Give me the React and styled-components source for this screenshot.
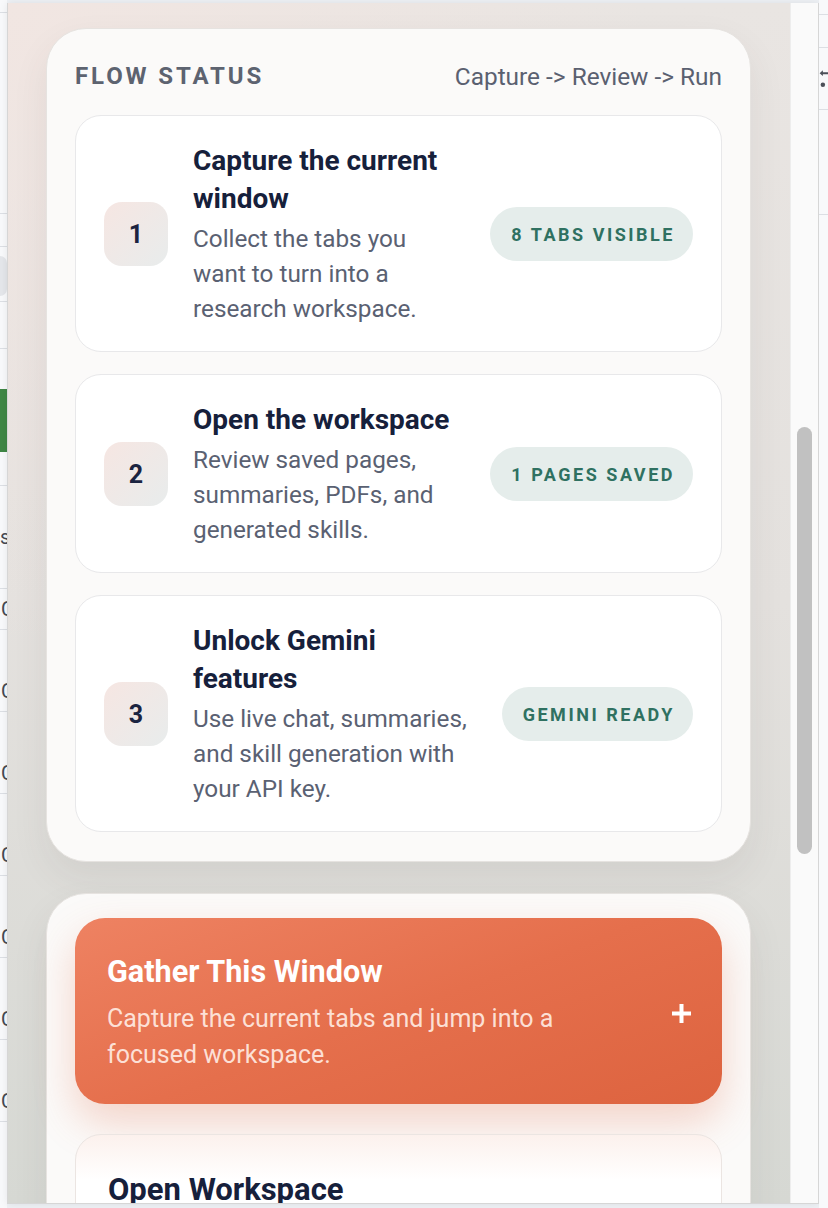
import React from 'react';
import styled, { createGlobalStyle } from 'styled-components';

const GlobalStyle = createGlobalStyle`
  html, body {
    margin: 0;
    padding: 0;
  }
  body {
    background: #f7f8fa;
    font-family: Roboto, "Liberation Sans", Arial, sans-serif;
    overflow: hidden;
  }
  * {
    box-sizing: border-box;
  }
`;

const Screen = styled.div`
  display: flex;
  width: 828px;
  height: 1208px;
  overflow: hidden;
  background: #eef1f5;
`;

const PageEdge = styled.div`
  width: ${p => p.$w}px;
  flex-shrink: 0;
  display: flex;
  flex-direction: column;
  overflow: hidden;
  background: #f8f9fb;
`;

const EdgeRow = styled.div`
  height: ${p => p.$h}px;
  flex-shrink: 0;
  display: flex;
  align-items: center;
  border-bottom: ${p => (p.$line ? '1px solid #dcdfe4' : 'none')};
  background: ${p => p.$fill || 'transparent'};
  border-radius: ${p => (p.$round ? '0 12px 12px 0' : '0')};
  color: #454a52;
  font-size: 20px;
  line-height: 1;
  white-space: nowrap;
  padding-left: ${p => p.$shift || 0}px;
`;

const Window = styled.div`
  display: flex;
  width: 812px;
  height: 1201px;
  margin-top: 3px;
  flex-shrink: 0;
  border: 1px solid #d6d6d6;
  border-top: none;
  box-shadow: 0 0 8px rgba(0, 0, 0, 0.08);
  overflow: hidden;
`;

const Panel = styled.main`
  flex: 1;
  display: flex;
  flex-direction: column;
  gap: 31px;
  padding: 25px 39px 0 38px;
  overflow: hidden;
  background:
    radial-gradient(circle at 0% 0%, rgba(242, 230, 226, 0.9), transparent 45%),
    linear-gradient(180deg, #e9e5e2 0%, #e4e1de 50%, #d6d8d3 100%);
`;

const ScrollTrack = styled.div`
  width: 28px;
  flex-shrink: 0;
  padding: 424px 0 0 6px;
  background: #fafafa;
  border-left: 1px solid #ededed;
`;

const ScrollThumb = styled.div`
  width: 15px;
  height: 427px;
  border-radius: 8px;
  background: #c1c1c1;
`;

const Surface = styled.section`
  flex-shrink: 0;
  display: flex;
  flex-direction: column;
  padding: ${p => p.$pad};
  gap: ${p => p.$gap || 0}px;
  background: #fbfaf9;
  border: 1px solid #e6e3e0;
  border-radius: 40px;
  box-shadow: 0 16px 36px rgba(80, 70, 60, 0.08);
`;

const SectionHead = styled.header`
  display: flex;
  align-items: center;
  justify-content: space-between;
  height: 30px;
  margin-bottom: 24px;
`;

const Eyebrow = styled.h2`
  margin: 0;
  font-size: 24px;
  font-weight: 700;
  letter-spacing: 0.12em;
  text-transform: uppercase;
  color: #5d6370;
`;

const FlowHint = styled.span`
  font-size: 24.4px;
  color: #5a6070;
`;

const StepList = styled.div`
  display: flex;
  flex-direction: column;
  gap: 22px;
`;

const StepCard = styled.article`
  display: grid;
  grid-template-columns: 64px 1fr auto;
  column-gap: 25px;
  align-items: center;
  padding: 26px 28px 25px;
  background: #ffffff;
  border: 1px solid #e8e8ea;
  border-radius: 26px;
`;

const StepNumber = styled.div`
  width: 64px;
  height: 64px;
  display: flex;
  align-items: center;
  justify-content: center;
  border-radius: 18px;
  background: linear-gradient(135deg, #f6e6e2 0%, #e8ecec 100%);
  font-size: 25px;
  font-weight: 700;
  color: #1b2440;
`;

const StepText = styled.div`
  min-width: 0;
  padding-right: 4px;
`;

const StepTitle = styled.h3`
  margin: 0;
  font-size: 28px;
  line-height: 38px;
  font-weight: 700;
  color: #16203b;
`;

const StepDesc = styled.p`
  margin: 3px 0 0;
  font-size: 24.3px;
  line-height: 35px;
  color: #5a6172;
`;

const Pill = styled.span`
  display: inline-flex;
  align-items: center;
  height: 54px;
  padding: 0 18px 0 21px;
  border-radius: 27px;
  background: #e5edeb;
  color: #2f7161;
  font-size: 18px;
  font-weight: 700;
  letter-spacing: 0.14em;
  text-transform: uppercase;
  white-space: nowrap;
`;

const PrimaryAction = styled.button`
  display: flex;
  align-items: center;
  gap: 32px;
  width: 100%;
  padding: 36px 31px 31px 32px;
  border: none;
  border-radius: 30px;
  text-align: left;
  font-family: inherit;
  color: #ffffff;
  background: linear-gradient(160deg, #ee8262 0%, #e56f4c 50%, #dd633f 100%);
  box-shadow: 0 18px 40px rgba(228, 110, 76, 0.28);
  cursor: pointer;
`;

const ActionText = styled.div`
  flex: 1;
  max-width: 500px;
`;

const ActionTitle = styled.div`
  font-size: 30.6px;
  line-height: 36px;
  font-weight: 700;
`;

const ActionDesc = styled.div`
  margin-top: 11px;
  font-size: 25px;
  line-height: 36px;
  color: rgba(255, 236, 228, 0.92);
`;

const PlusMark = styled.svg`
  width: 19px;
  height: 19px;
  margin-left: auto;
  flex-shrink: 0;
`;

const SecondaryCard = styled.div`
  padding: 37px 32px 40px;
  border: 1px solid #ebe5e2;
  border-radius: 26px;
  background: linear-gradient(180deg, #fcf1ed 0%, #ffffff 40%);
`;

const SecondaryTitle = styled.div`
  font-size: 31px;
  line-height: 36px;
  font-weight: 700;
  color: #16203b;
`;

const steps = [
  {
    n: 1,
    title: 'Capture the current window',
    desc: 'Collect the tabs you want to turn into a research workspace.',
    pill: '8 tabs visible',
  },
  {
    n: 2,
    title: 'Open the workspace',
    desc: 'Review saved pages, summaries, PDFs, and generated skills.',
    pill: '1 pages saved',
  },
  {
    n: 3,
    title: 'Unlock Gemini features',
    desc: 'Use live chat, summaries, and skill generation with your API key.',
    pill: 'Gemini ready',
  },
];

const leftRows = [
  { h: 13, line: true },
  { h: 201, line: true },
  { h: 33, line: true },
  { h: 9 },
  { h: 40, fill: '#e4e6ea', round: true },
  { h: 6, line: true },
  { h: 47, line: true },
  { h: 40 },
  { h: 63, fill: '#3f8745' },
  { h: 34, line: true },
  { h: 103, text: 's', right: true, line: true },
  { h: 41, text: 'C', shift: 1, line: true },
  { h: 41 },
  { h: 41, text: 'C', shift: 1, line: true },
  { h: 41 },
  { h: 41, text: 'C', shift: 1, line: true },
  { h: 41 },
  { h: 41, text: 'C', shift: 1, line: true },
  { h: 41 },
  { h: 41, text: 'C', shift: 1, line: true },
  { h: 41 },
  { h: 41, text: 'C', shift: 1, line: true },
  { h: 41 },
  { h: 41, text: 'C', shift: 1, line: true },
  { h: 41 },
];

const rightRows = [
  { h: 15, line: true },
  { h: 33, line: true },
  { h: 62, line: true, icon: true },
  { h: 105, line: true },
];

const CornerArrow = () => (
  <svg width="14" height="30" viewBox="0 0 14 30">
    <path d="M1 6 L6 1.5 L6 4.5 L14 4.5 L14 7.5 L6 7.5 L6 10.5 Z" fill="#4b5059" />
    <circle cx="6" cy="24" r="3.5" fill="#4b5059" />
  </svg>
);

const App = () => {
  return (
    <>
      <GlobalStyle />
      <Screen>
        <PageEdge $w={7}>
          {leftRows.map((r, i) => (
            <EdgeRow
              key={i}
              $h={r.h}
              $line={r.line}
              $fill={r.fill}
              $round={r.round}
              $shift={r.right ? -6 : r.shift}
            >
              {r.text}
            </EdgeRow>
          ))}
        </PageEdge>

        <Window>
          <Panel>
            <Surface $pad="32px 28px 29px">
              <SectionHead>
                <Eyebrow>Flow Status</Eyebrow>
                <FlowHint>Capture -&gt; Review -&gt; Run</FlowHint>
              </SectionHead>
              <StepList>
                {steps.map(step => (
                  <StepCard key={step.n}>
                    <StepNumber>{step.n}</StepNumber>
                    <StepText>
                      <StepTitle>{step.title}</StepTitle>
                      <StepDesc>{step.desc}</StepDesc>
                    </StepText>
                    <Pill>{step.pill}</Pill>
                  </StepCard>
                ))}
              </StepList>
            </Surface>

            <Surface $pad="24px 28px 0" $gap={30}>
              <PrimaryAction>
                <ActionText>
                  <ActionTitle>Gather This Window</ActionTitle>
                  <ActionDesc>Capture the current tabs and jump into a focused workspace.</ActionDesc>
                </ActionText>
                <PlusMark viewBox="0 0 19 19">
                  <path d="M7.5 0h4v7.5H19v4h-7.5V19h-4v-7.5H0v-4h7.5z" fill="#ffffff" />
                </PlusMark>
              </PrimaryAction>
              <SecondaryCard>
                <SecondaryTitle>Open Workspace</SecondaryTitle>
              </SecondaryCard>
            </Surface>
          </Panel>
          <ScrollTrack>
            <ScrollThumb />
          </ScrollTrack>
        </Window>

        <PageEdge $w={9}>
          {rightRows.map((r, i) => (
            <EdgeRow key={i} $h={r.h} $line={r.line}>
              {r.icon && <CornerArrow />}
            </EdgeRow>
          ))}
        </PageEdge>
      </Screen>
    </>
  );
};

export default App;
